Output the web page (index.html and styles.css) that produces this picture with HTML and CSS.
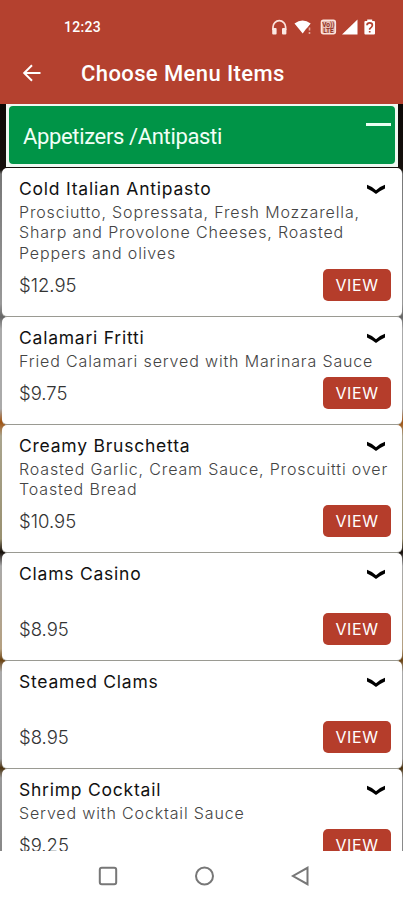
FILE: index.html
```html
<!DOCTYPE html>
<html lang="en">
<head>
    <meta charset="UTF-8">
    <meta name="viewport" content="width=device-width, initial-scale=1.0">
    <title>Choose Menu Items</title>
    <link rel="stylesheet" href="styles.css">
</head>
<body>
    <header class="header">
        <div class="status-bar">
            <span class="time">12:23</span>
            <svg class="status-icons" width="106" height="18" viewBox="0 0 106 18">
                <!-- headphones -->
                <path d="M3 12V9a6.300 6.300 0 0 1 12.600 0v3" fill="none" stroke="#fbe3dc" stroke-width="1.700"/>
                <rect x="2.200" y="10" width="4.400" height="6.500" rx="1" fill="#fbe9e4"/>
                <rect x="12" y="10" width="4.400" height="6.500" rx="1" fill="#fbe9e4"/>
                <!-- wifi -->
                <path d="M24.500 5.500Q32.500-.5 40.700 5.500L37.500 9.500 36 11 32.700 15.500Z" fill="#fff"/>
                <path d="M39.500 9.500v3M39.500 14v2" stroke="#e0a598" stroke-width="1.600"/>
                <!-- volte -->
                <rect x="51.400" y="2.200" width="14" height="13.600" rx="2" fill="#e9bdb3" stroke="#fbe3dc" stroke-width="1.400"/>
                <text class="lte-text" x="58.400" y="8.500">Vo))</text>
                <text class="lte-text" x="58.400" y="14.800">LTE</text>
                <!-- signal -->
                <path d="M72 16.500 87.500 1.500v15z" fill="#fff"/>
                <!-- battery -->
                <path d="M97.200 3V1.500h5V3h1.800a1 1 0 0 1 1 1v11.500a1 1 0 0 1-1 1h-8.600a1 1 0 0 1-1-1V4a1 1 0 0 1 1-1z" fill="#fff"/>
                <path d="M97 7.200q0-2.400 2.700-2.400t2.700 2.400q0 1.500-2.700 3.600v1M99.700 13v1.500" fill="none" stroke="#b4412f" stroke-width="1.700"/>
            </svg>
        </div>
        <div class="app-bar">
            <svg class="back" width="20" height="18" viewBox="0 0 20 18">
                <path d="M18.500 9H2M10 1.300 2.200 9 10 16.700" fill="none" stroke="#fff" stroke-width="2"/>
            </svg>
            <h1>Choose Menu Items</h1>
        </div>
    </header>

    <main class="menu">
        <div class="category">
            <div class="category-box">
                <span>Appetizers /Antipasti</span>
                <div class="minus"></div>
            </div>
        </div>

        <div class="item">
            <div class="item-top">
                <h2>Cold Italian Antipasto</h2>
                <svg class="chevron" width="20" height="11" viewBox="0 0 20 11"><path d="M1 .8Q6 2.500 10 6.200 14 2.500 19 .8V4.400Q14 6.600 10 10 6 6.600 1 4.400Z"/></svg>
            </div>
            <p class="desc">Prosciutto, Sopressata, Fresh Mozzarella,<br>Sharp and Provolone Cheeses, Roasted<br>Peppers and olives</p>
            <div class="item-bottom">
                <span class="price">$12.95</span>
                <button>VIEW</button>
            </div>
        </div>

        <div class="item">
            <div class="item-top">
                <h2>Calamari Fritti</h2>
                <svg class="chevron" width="20" height="11" viewBox="0 0 20 11"><path d="M1 .8Q6 2.500 10 6.200 14 2.500 19 .8V4.400Q14 6.600 10 10 6 6.600 1 4.400Z"/></svg>
            </div>
            <p class="desc">Fried Calamari served with Marinara Sauce</p>
            <div class="item-bottom">
                <span class="price">$9.75</span>
                <button>VIEW</button>
            </div>
        </div>

        <div class="item">
            <div class="item-top">
                <h2>Creamy Bruschetta</h2>
                <svg class="chevron" width="20" height="11" viewBox="0 0 20 11"><path d="M1 .8Q6 2.500 10 6.200 14 2.500 19 .8V4.400Q14 6.600 10 10 6 6.600 1 4.400Z"/></svg>
            </div>
            <p class="desc">Roasted Garlic, Cream Sauce, Proscuitti over<br>Toasted Bread</p>
            <div class="item-bottom">
                <span class="price">$10.95</span>
                <button>VIEW</button>
            </div>
        </div>

        <div class="item">
            <div class="item-top">
                <h2>Clams Casino</h2>
                <svg class="chevron" width="20" height="11" viewBox="0 0 20 11"><path d="M1 .8Q6 2.500 10 6.200 14 2.500 19 .8V4.400Q14 6.600 10 10 6 6.600 1 4.400Z"/></svg>
            </div>
            <p class="desc"></p>
            <div class="item-bottom">
                <span class="price">$8.95</span>
                <button>VIEW</button>
            </div>
        </div>

        <div class="item">
            <div class="item-top">
                <h2>Steamed Clams</h2>
                <svg class="chevron" width="20" height="11" viewBox="0 0 20 11"><path d="M1 .8Q6 2.500 10 6.200 14 2.500 19 .8V4.400Q14 6.600 10 10 6 6.600 1 4.400Z"/></svg>
            </div>
            <p class="desc"></p>
            <div class="item-bottom">
                <span class="price">$8.95</span>
                <button>VIEW</button>
            </div>
        </div>

        <div class="item">
            <div class="item-top">
                <h2>Shrimp Cocktail</h2>
                <svg class="chevron" width="20" height="11" viewBox="0 0 20 11"><path d="M1 .8Q6 2.500 10 6.200 14 2.500 19 .8V4.400Q14 6.600 10 10 6 6.600 1 4.400Z"/></svg>
            </div>
            <p class="desc">Served with Cocktail Sauce</p>
            <div class="item-bottom">
                <span class="price">$9.25</span>
                <button>VIEW</button>
            </div>
        </div>
    </main>

    <nav class="nav-bar">
        <svg width="20" height="20" viewBox="0 0 20 20"><rect x="1.800" y="1.800" width="16.400" height="16.400" rx="2"/></svg>
        <svg width="20" height="20" viewBox="0 0 20 20"><circle cx="10.500" cy="10" r="8.500"/></svg>
        <svg width="20" height="20" viewBox="0 0 20 20"><path d="M17.500 1.800V18.200L3 10Z"/></svg>
    </nav>
</body>
</html>
```
FILE: styles.css
```css
body {
    font-family: Inter, "Open Sans", sans-serif;
    margin: 0;
    padding: 0;
    height: 900px;
    display: flex;
    flex-direction: column;
    overflow: hidden;
    background-color: #fff;
}
.header {
    height: 104px;
    flex: none;
    background-color: #b4412f;
    color: #fff;
    font-family: Roboto, sans-serif;
}
.status-bar {
    display: flex;
    justify-content: space-between;
    align-items: center;
    height: 18px;
    padding: 18px 27px 0 64px;
}
.time {
    font-size: 14px;
    font-weight: 500;
    letter-spacing: 0.3px;
}
.lte-text {
    font-size: 6.5px;
    font-weight: 700;
    text-anchor: middle;
    fill: #8f2f20;
}
.app-bar {
    display: flex;
    align-items: center;
    height: 40px;
    padding: 17px 22px 0;
}
.back {
    margin-right: 39px;
}
h1 {
    margin: 0;
    font-size: 22px;
    font-weight: 500;
    letter-spacing: 0.4px;
}
.menu {
    flex: none;
    height: 747px;
    overflow: hidden;
    background: linear-gradient(#0d0806 0, #15100c 66px, #777 70px, #999 200px, #666 213px, #aaa 225px, #aaa 305px, #a0520f 318px, #aaa58f 332px, #999070 435px, #150e0a 448px, #aaa 462px, #b5a080 545px, #6b4210 556px, #aaa 568px, #999 655px, #4a300c 664px, #999 674px, #888);
}
.category {
    box-sizing: border-box;
    height: 63px;
    margin: 0 5px 1px 6px;
    padding: 2px 3px 2px 3px;
    background-color: #f0f8f2;
}
.category-box {
    display: flex;
    justify-content: space-between;
    box-sizing: border-box;
    height: 58px;
    padding: 0 4px 0 14px;
    border-radius: 4px;
    background-color: #009447;
    color: #f0fff6;
    font-family: Roboto, sans-serif;
    font-size: 22px;
    letter-spacing: -0.35px;
    line-height: 61px;
}
.minus {
    width: 25px;
    height: 3px;
    margin-top: 17px;
    background-color: #e9fff2;
}
.item {
    margin: 0 1px 0 2px;
    padding: 9px 11px 15px 17px;
    border-bottom: 1px solid #9a9a92;
    border-radius: 5px;
    background-color: #fff;
}
.item-top {
    display: flex;
    justify-content: space-between;
    height: 25px;
}
h2 {
    margin: 0;
    color: #111;
    font-size: 17.5px;
    font-weight: 400;
    letter-spacing: 0.77px;
    line-height: 24px;
}
.chevron {
    margin: 7px 5px 0 0;
}
.desc {
    min-height: 20.4px;
    margin: 0 -10px 5.5px 0;
    color: #444;
    font-size: 16px;
    font-weight: 300;
    letter-spacing: 0.85px;
    line-height: 20.4px;
    white-space: nowrap;
}
.item-bottom {
    display: flex;
    justify-content: space-between;
    align-items: center;
    height: 32px;
}
.price {
    color: #333;
    font-size: 18.5px;
    font-weight: 300;
    line-height: 24px;
    padding-top: 1px;
}
button {
    width: 68px;
    height: 32px;
    margin-top: 1px;
    padding: 0;
    border: none;
    border-radius: 5px;
    background-color: #b53d2b;
    color: #fff;
    font-family: Inter, sans-serif;
    font-size: 16px;
    letter-spacing: 0.6px;
}
.nav-bar {
    display: flex;
    gap: 76px;
    padding: 15px 0 0 98px;
    background-color: #fff;
}
.nav-bar svg {
    fill: none;
    stroke: #777;
    stroke-width: 2;
}
```
